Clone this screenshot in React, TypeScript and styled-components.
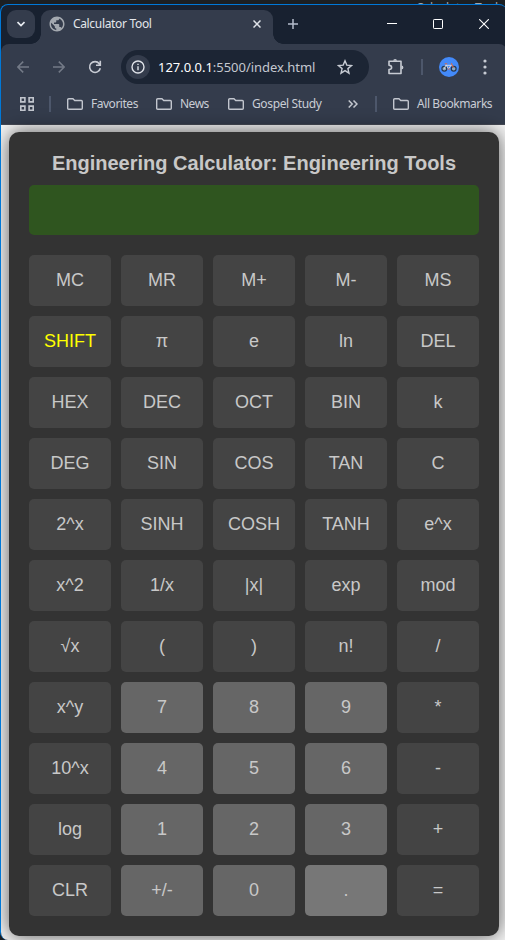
import React from "react";
import styled, { createGlobalStyle } from "styled-components";
import { MdPublic } from "react-icons/md";

const Global = createGlobalStyle`
  *, *::before, *::after { box-sizing: border-box; }
  html, body { margin: 0; padding: 0; background: #1c1f22; overflow: hidden; }
  svg { display: block; flex: none; }
`;

const Desktop = styled.div`
  position: relative;
  width: 505px;
  height: 940px;
  padding-top: 4px;
  background: #1c1f22;
  overflow: hidden;
`;

const BehindTitle = styled.div`
  position: absolute;
  top: 0;
  left: 416px;
  width: 88px;
  height: 4px;
  overflow: hidden;
  font: 12px/15px "Noto Sans", sans-serif;
  letter-spacing: -0.1px;
  color: #a4a6a8;
  white-space: nowrap;
`;

const Window = styled.div`
  display: flex;
  flex-direction: column;
  width: 507px;
  height: 936px;
  border: 1px solid #0078d7;
  border-right: 0;
  border-bottom: 0;
  border-radius: 8px 8px 0 8px;
  background: #182130;
  overflow: hidden;
`;

const TabStrip = styled.div`
  display: flex;
  flex: none;
  height: 39px;
  padding: 5px 0 0 6px;
`;

const TabSearch = styled.button`
  display: grid;
  place-items: center;
  width: 28px;
  height: 28px;
  margin-right: 6px;
  padding: 0;
  border: 0;
  border-radius: 9px;
  background: #343c4c;
`;

const Tab = styled.div`
  position: relative;
  display: flex;
  align-items: center;
  width: 233px;
  height: 34px;
  padding: 0 12px 6px 7px;
  border-radius: 9px 9px 0 0;
  background: #343c4c;
  &::before, &::after {
    content: "";
    position: absolute;
    bottom: 0;
    width: 10px;
    height: 10px;
  }
  &::before { left: -10px; background: radial-gradient(circle at 0 0, transparent 9.5px, #343c4c 10px); }
  &::after { right: -10px; background: radial-gradient(circle at 100% 0, transparent 9.5px, #343c4c 10px); }
`;

const TabTitle = styled.span`
  flex: 1;
  margin-left: 7px;
  font: 12px/16px "Noto Sans", sans-serif;
  letter-spacing: -0.32px;
  color: #e3e6eb;
  white-space: nowrap;
`;

const NewTab = styled.button`
  display: grid;
  place-items: center;
  width: 28px;
  height: 28px;
  margin-left: 6px;
  padding: 0;
  border: 0;
  background: none;
`;

const Captions = styled.div`
  display: flex;
  margin-left: 62px;
  height: 28px;
`;

const Caption = styled.div`
  display: grid;
  place-items: center;
  width: 46px;
`;

const Toolbar = styled.div`
  display: flex;
  flex: none;
  align-items: center;
  height: 46px;
  padding-left: 10px;
  border-radius: 8px 8px 0 0;
  background: #343c4c;
`;

const Tool = styled.div<{ $w?: number }>`
  display: grid;
  flex: none;
  place-items: center;
  width: ${(p) => p.$w ?? 36}px;
`;

const Omnibox = styled.div`
  display: flex;
  flex: none;
  align-items: center;
  width: 248px;
  height: 34px;
  margin: 0 9px 0 2px;
  padding: 0 16px 0 5px;
  border-radius: 17px;
  background: #1c2534;
`;

const SiteInfo = styled.div`
  display: grid;
  flex: none;
  place-items: center;
  width: 24px;
  height: 24px;
  border-radius: 50%;
  background: #343c4c;
`;

const Url = styled.span`
  flex: 1;
  margin-left: 8px;
  font: 13px/20px "Noto Sans", sans-serif;
  letter-spacing: -0.03px;
  color: #c4c8d0;
  white-space: nowrap;
  b { font-weight: 400; color: #fff; }
`;

const Divider = styled.div<{ $l: number; $r: number }>`
  flex: none;
  width: 2px;
  height: 16px;
  margin: 0 ${(p) => p.$r}px 0 ${(p) => p.$l}px;
  background: #4d576b;
`;

const Bookmarks = styled.div`
  display: flex;
  flex: none;
  align-items: center;
  height: 35px;
  padding: 0 0 7px 19px;
  border-bottom: 1px solid #464a55;
  background: #343c4c;
`;

const Bookmark = styled.div<{ $w: number }>`
  display: flex;
  flex: none;
  align-items: center;
  gap: 8px;
  width: ${(p) => p.$w}px;
`;

const BookmarkLabel = styled.span<{ $track: number }>`
  font: 12px/16px "Noto Sans", sans-serif;
  letter-spacing: ${(p) => p.$track}px;
  color: #c9cdd5;
  white-space: nowrap;
`;

const Page = styled.main`
  flex: 1;
  padding: 7px 0 0 8px;
  background: #f6f6f6;
`;

const Calculator = styled.section`
  width: 490px;
  height: 804px;
  padding: 20px;
  border-radius: 10px;
  background: #333;
  box-shadow: 0 0 20px rgba(0, 0, 0, 0.65);
`;

const Title = styled.h1`
  height: 33px;
  margin: 0;
  font: bold 20px/22px "Liberation Sans", Arial, sans-serif;
  color: #c8c8c8;
  text-align: center;
  white-space: nowrap;
`;

const Display = styled.div`
  height: 50px;
  margin-bottom: 20px;
  border-radius: 5px;
  background: #2f551f;
`;

const Keys = styled.div`
  display: grid;
  grid-template-columns: repeat(5, 82px);
  grid-auto-rows: 51px;
  gap: 10px;
`;

type Tone = "plain" | "digit" | "hover" | "shift";
const fills: Record<Tone, string> = { plain: "#444", shift: "#444", digit: "#666", hover: "#777" };

const Key = styled.button<{ $tone: Tone }>`
  padding: 0 0 2px;
  border: 0;
  border-radius: 5px;
  background: ${(p) => fills[p.$tone]};
  color: ${(p) => (p.$tone === "shift" ? "#ff0" : "#c8c8c8")};
  font: 18px/20px "Liberation Sans", Arial, sans-serif;
`;

const rows = [
  ["MC", "MR", "M+", "M-", "MS"],
  ["SHIFT", "π", "e", "ln", "DEL"],
  ["HEX", "DEC", "OCT", "BIN", "k"],
  ["DEG", "SIN", "COS", "TAN", "C"],
  ["2^x", "SINH", "COSH", "TANH", "e^x"],
  ["x^2", "1/x", "|x|", "exp", "mod"],
  ["√x", "(", ")", "n!", "/"],
  ["x^y", "7", "8", "9", "*"],
  ["10^x", "4", "5", "6", "-"],
  ["log", "1", "2", "3", "+"],
  ["CLR", "+/-", "0", ".", "="],
];

const toneOf = (k: string): Tone =>
  k === "SHIFT" ? "shift" : k === "." ? "hover" : /^(\d|\+\/-)$/.test(k) ? "digit" : "plain";

const Folder = () => (
  <svg width="16" height="12" viewBox="0 0 16 12" fill="none" stroke="#c2c6ce" strokeWidth="1.4" strokeLinejoin="round">
    <path d="M.7 1.7q0-1 1-1H6l1.7 1.8h6.6q1 0 1 1v6.8q0 1-1 1H1.7q-1 0-1-1z" />
  </svg>
);

const Arrow = ({ flip = false }: { flip?: boolean }) => (
  <svg width="12" height="12" viewBox="0 0 12 12" fill="none" stroke="#737a87" strokeWidth="1.5">
    <path d={flip ? "M0 6h11M5.8.6 11.2 6l-5.4 5.4" : "M12 6H1M6.2.6.8 6l5.4 5.4"} />
  </svg>
);

export default function App() {
  return (
    <Desktop>
      <Global />
      <BehindTitle>Calculator Tool</BehindTitle>
      <Window>
        <TabStrip>
          <TabSearch>
            <svg width="8" height="6" viewBox="0 0 8 6" fill="none" stroke="#e8ebf0" strokeWidth="1.7">
              <path d="m.5 1 3.5 3.5L7.5 1" />
            </svg>
          </TabSearch>
          <Tab>
            <MdPublic size={18} color="#a3a8af" />
            <TabTitle>Calculator Tool</TabTitle>
            <svg width="8" height="8" viewBox="0 0 8 8" stroke="#dfe2e8" strokeWidth="1.5">
              <path d="m.5.5 7 7m0-7-7 7" />
            </svg>
          </Tab>
          <NewTab>
            <svg width="10" height="10" viewBox="0 0 10 10" stroke="#b4bccb" strokeWidth="1.5">
              <path d="M5 0v10M0 5h10" />
            </svg>
          </NewTab>
          <Captions>
            <Caption>
              <svg width="10" height="10" viewBox="0 0 10 10"><path d="M0 4h10v1H0z" fill="#fff" /></svg>
            </Caption>
            <Caption>
              <svg width="10" height="10" viewBox="0 0 10 10"><rect x=".5" y=".5" width="9" height="9" rx=".7" fill="none" stroke="#fff" /></svg>
            </Caption>
            <Caption>
              <svg width="10" height="10" viewBox="0 0 10 10" stroke="#fff" strokeWidth="1.1"><path d="m.2.2 9.6 9.6m0-9.6L.2 9.8" /></svg>
            </Caption>
          </Captions>
        </TabStrip>

        <Toolbar>
          <Tool $w={24}><Arrow /></Tool>
          <Tool $w={48}><Arrow flip /></Tool>
          <Tool $w={24}>
            <svg width="14" height="14" viewBox="0 0 14 14" fill="none" stroke="#c7cbd3" strokeWidth="1.6">
              <path d="M12.3 8.2A5.4 5.4 0 1 1 11.3 3.7l1 1.3M12.3.8v4.5H8" />
            </svg>
          </Tool>
          <Tool $w={12} />
          <Omnibox>
            <SiteInfo>
              <svg width="14" height="14" viewBox="0 0 14 14" fill="none" stroke="#dfe2e8" strokeWidth="1.4">
                <circle cx="7" cy="7" r="6" />
                <path d="M7 6.200v4M7 3.700v1.300" />
              </svg>
            </SiteInfo>
            <Url><b>127.0.0.1</b>:5500/index.html</Url>
            <svg width="16" height="16" viewBox="0 0 16 16" fill="none" stroke="#c7cbd3" strokeWidth="1.4">
              <path d="m8 1.800 1.800 4.300 4.700.4-3.600 3.100 1.100 4.600L8 11.700l-4 2.500 1.100-4.600-3.600-3.100 4.700-.4z" />
            </svg>
          </Omnibox>
          <Tool>
            <svg width="18" height="18" viewBox="0 0 18 18" fill="none" strokeLinejoin="round">
              <path d="M2 3.300h12v12.200H2v-4q2.600-.2 2.600-2.100T2 7.300z" stroke="#c7cbd3" strokeWidth="1.6" />
              <path d="M6.200 2.800a1.900 1.900 0 0 1 3.800 0zM14.500 7.500a1.900 1.900 0 0 1 0 3.800z" fill="#c7cbd3" />
            </svg>
          </Tool>
          <Divider $l={7} $r={16} />
          <svg width="20" height="20" viewBox="0 0 20 20">
            <circle cx="10" cy="10" r="10" fill="#438afa" />
            <g fill="#8ba8c8" stroke="#27394f" strokeWidth="1.2">
              <circle cx="5.3" cy="11.8" r="2.4" />
              <circle cx="14.7" cy="11.8" r="2.4" />
            </g>
            <path d="M5.300 11.800 7 7.800l2.500 4 3-4M7 8.300h5.500" fill="none" stroke="#e4ded9" strokeWidth=".9" />
            <path d="M5.800 6.700h2.400M12.300 6.200l2.200 4.500M8.700 12h2" stroke="#d36a4a" strokeWidth="1.1" fill="none" />
          </svg>
          <Tool $w={52}>
            <svg width="4" height="16" viewBox="0 0 4 16" fill="#c7cbd3">
              <circle cx="2" cy="2" r="1.6" /><circle cx="2" cy="8" r="1.6" /><circle cx="2" cy="14" r="1.6" />
            </svg>
          </Tool>
        </Toolbar>

        <Bookmarks>
          <svg width="14" height="14" viewBox="0 0 14 14" fill="none" stroke="#c2c6ce" strokeWidth="1.6">
            <path d="M.8.8h4.100v4.100H.8zM9.100.8h4.100v4.100H9.100zM.8 9.100h4.100v4.100H.8zM9.100 9.100h4.100v4.100H9.100z" />
          </svg>
          <Divider $l={15} $r={16} />
          <Bookmark $w={89}><Folder /><BookmarkLabel $track={-0.48}>Favorites</BookmarkLabel></Bookmark>
          <Bookmark $w={72}><Folder /><BookmarkLabel $track={-0.5}>News</BookmarkLabel></Bookmark>
          <Bookmark $w={120}><Folder /><BookmarkLabel $track={-0.37}>Gospel Study</BookmarkLabel></Bookmark>
          <svg width="10" height="8" viewBox="0 0 10 8" fill="none" stroke="#c2c6ce" strokeWidth="1.5">
            <path d="m.7.5 3.500 3.500L.7 7.500M5.500.5 9 4 5.500 7.500" />
          </svg>
          <Divider $l={17} $r={16} />
          <Bookmark $w={104}><Folder /><BookmarkLabel $track={-0.43}>All Bookmarks</BookmarkLabel></Bookmark>
        </Bookmarks>

        <Page>
          <Calculator>
            <Title>Engineering Calculator: Engineering Tools</Title>
            <Display />
            <Keys>
              {rows.flat().map((k) => (
                <Key key={k} $tone={toneOf(k)}>{k}</Key>
              ))}
            </Keys>
          </Calculator>
        </Page>
      </Window>
    </Desktop>
  );
}
